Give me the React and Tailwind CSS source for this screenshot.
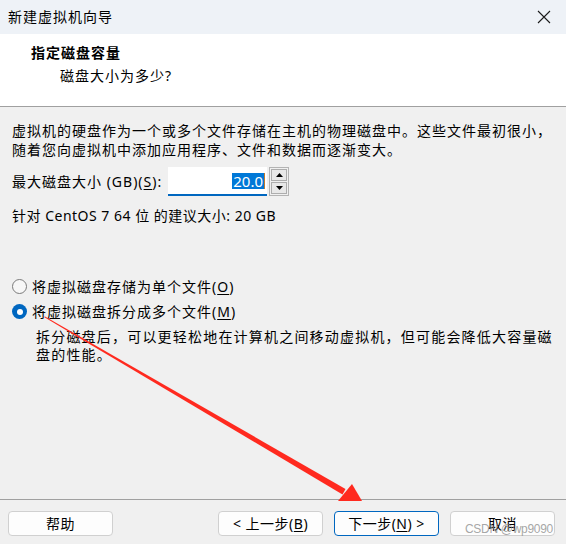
import React from "react";

const FONT = {
  fontFamily: "'Noto Sans', 'Noto Sans CJK SC', sans-serif",
};

function U({ children }) {
  return <span className="underline underline-offset-2">{children}</span>;
}

function Radio({ checked }) {
  if (checked) {
    return (
      <span className="flex h-[15px] w-[15px] shrink-0 items-center justify-center rounded-full bg-[#0067c0]">
        <span className="h-[6px] w-[6px] rounded-full bg-white" />
      </span>
    );
  }
  return (
    <span className="h-[15px] w-[15px] shrink-0 rounded-full border border-[#7a7a7a] bg-[#f7f7f7]" />
  );
}

function Button({ children, primary }) {
  return (
    <button
      className={
        primary
          ? "flex h-[25px] w-[105px] items-center justify-center rounded-[4px] border border-[#0067c0] bg-[#fdfdfd] text-[14px] text-black"
          : "flex h-[25px] w-[105px] items-center justify-center rounded-[4px] border border-[#d0d0d0] bg-[#fdfdfd] text-[14px] text-black"
      }
    >
      {children}
    </button>
  );
}

function Arrow() {
  return (
    <svg
      className="pointer-events-none absolute left-0 top-0"
      width="566"
      height="544"
      viewBox="0 0 566 544"
    >
      <polygon points="44,317 45,316.5 345.5,489 342.5,494.5" fill="#ff2a1f" />
      <polygon points="352,484 362,501 338,501" fill="#ff2a1f" />
    </svg>
  );
}

export default function App() {
  return (
    <div
      className="relative flex h-[544px] w-[566px] flex-col overflow-hidden bg-[#f0f0f0] text-[14px] tracking-[1px] text-black"
      style={FONT}
    >
      <div className="flex h-[34px] shrink-0 items-center justify-between bg-[#eef2f7] pl-[8px] pr-[15px]">
        <span className="leading-[20px]">新建虚拟机向导</span>
        <svg width="14" height="14" viewBox="0 0 14 14">
          <path d="M1 1 L13 13 M13 1 L1 13" stroke="#1b1b1b" strokeWidth="1.1" />
        </svg>
      </div>

      <div className="h-[73px] shrink-0 border-b border-[#a0a0a0] bg-white pl-[31px] pt-[9px]">
        <div className="font-bold leading-[20px]">指定磁盘容量</div>
        <div className="mt-[3px] pl-[29px] leading-[20px]">磁盘大小为多少?</div>
      </div>

      <div className="flex flex-col px-[12px] pt-[14px]">
        <p className="whitespace-nowrap leading-[19px]">
          虚拟机的硬盘作为一个或多个文件存储在主机的物理磁盘中。这些文件最初很小，
          <br />
          随着您向虚拟机中添加应用程序、文件和数据而逐渐变大。
        </p>

        <div className="mt-[8px] flex h-[29px] items-center">
          <span className="w-[156px] leading-[19px]">
            最大磁盘大小 (GB)(<U>S</U>):
          </span>
          <div className="flex h-[29px] w-[99px] items-center justify-end border-b-2 border-[#0067c0] bg-white pr-[2px]">
            <span className="bg-[#0078d7] px-[1px] text-[15px] leading-[16px] tracking-normal text-white">
              20.0
            </span>
            <span className="h-[16px] w-[1px] bg-[#c07a30]" />
          </div>
          <div className="ml-[2px] flex h-[29px] w-[20px] flex-col gap-[1px] border border-[#b4b4b4] bg-[#f0f0f0] p-[1px]">
            <div className="flex flex-1 items-center justify-center border border-[#adadad] bg-[#e8e8e8]">
              <svg width="7" height="4" viewBox="0 0 7 4">
                <polygon points="3.5,0 7,4 0,4" fill="#000" />
              </svg>
            </div>
            <div className="flex flex-1 items-center justify-center border border-[#adadad] bg-[#e8e8e8]">
              <svg width="7" height="4" viewBox="0 0 7 4">
                <polygon points="0,0 7,0 3.5,4" fill="#000" />
              </svg>
            </div>
          </div>
        </div>

        <p className="mt-[10px] leading-[19px] tracking-[0.5px]">
          针对 CentOS 7 64 位 的建议大小: 20 GB
        </p>

        <div className="mt-[52px] flex h-[19px] items-center gap-[5px]">
          <Radio />
          <span className="leading-[19px]">
            将虚拟磁盘存储为单个文件(<U>O</U>)
          </span>
        </div>
        <div className="mt-[6px] flex h-[19px] items-center gap-[5px]">
          <Radio checked />
          <span className="leading-[19px]">
            将虚拟磁盘拆分成多个文件(<U>M</U>)
          </span>
        </div>
        <p className="mt-[7px] whitespace-nowrap pl-[24px] leading-[18px] tracking-[1.2px]">
          拆分磁盘后，可以更轻松地在计算机之间移动虚拟机，但可能会降低大容量磁
          <br />
          盘的性能。
        </p>
      </div>

      <div className="mt-auto flex h-[45px] shrink-0 items-start justify-between border-t border-[#a0a0a0] pl-[8px] pr-[11px] pt-[11px] tracking-[0.5px]">
        <Button>帮助</Button>
        <div className="flex gap-[11px]">
          <Button>
            &lt; 上一步(<U>B</U>)
          </Button>
          <Button primary>
            下一步(<U>N</U>) &gt;
          </Button>
          <Button>取消</Button>
        </div>
      </div>

      <Arrow />

      <span
        className="pointer-events-none absolute left-[465px] top-[521px] whitespace-nowrap text-[12px] leading-[16px] tracking-[-0.3px] text-[#8f8f8f]/80"
        style={{ fontFamily: "'Liberation Sans', Arial, sans-serif" }}
      >
        CSDN @wp9090
      </span>
    </div>
  );
}
